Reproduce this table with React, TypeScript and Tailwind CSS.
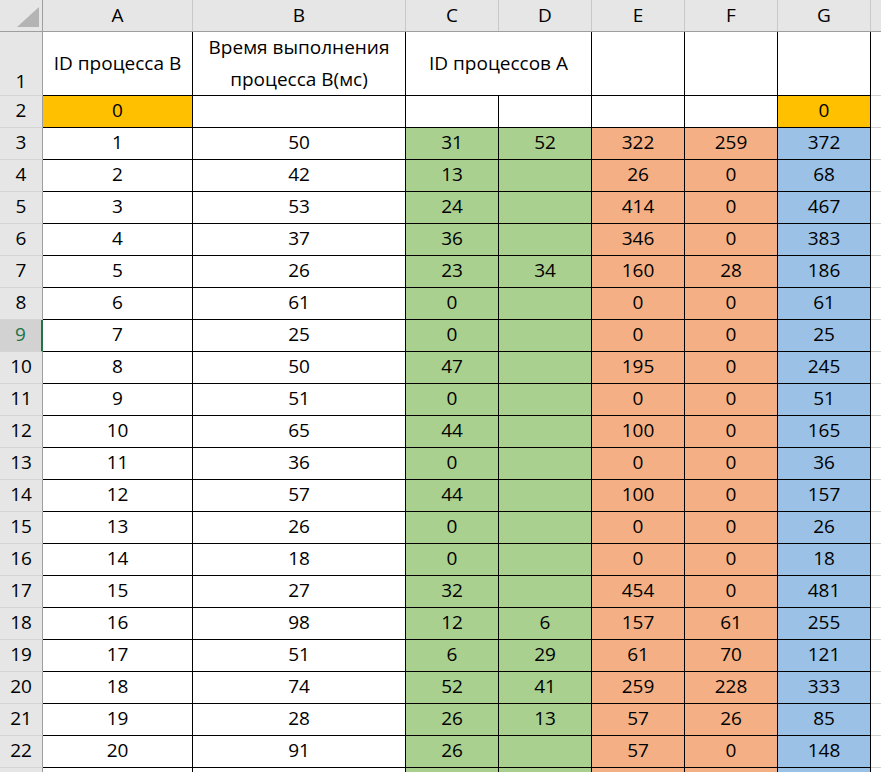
import * as React from "react";

type Fill = "none" | "orange" | "green" | "salmon" | "blue";

const fillClass: Record<Fill, string> = {
  none: "bg-white",
  orange: "bg-[#ffc000]",
  green: "bg-[#a9d08e]",
  salmon: "bg-[#f4b084]",
  blue: "bg-[#9bc2e6]",
};

// widths include the 1px right border
const cols = [
  { key: "A", w: "w-[150px]" },
  { key: "B", w: "w-[213px]" },
  { key: "C", w: "w-[93px]" },
  { key: "D", w: "w-[93px]" },
  { key: "E", w: "w-[93px]" },
  { key: "F", w: "w-[93px]" },
  { key: "G", w: "w-[93px]" },
];

const colFill: Fill[] = ["none", "none", "green", "green", "salmon", "salmon", "blue"];

const data: (number | "")[][] = [
  [1, 50, 31, 52, 322, 259, 372],
  [2, 42, 13, "", 26, 0, 68],
  [3, 53, 24, "", 414, 0, 467],
  [4, 37, 36, "", 346, 0, 383],
  [5, 26, 23, 34, 160, 28, 186],
  [6, 61, 0, "", 0, 0, 61],
  [7, 25, 0, "", 0, 0, 25],
  [8, 50, 47, "", 195, 0, 245],
  [9, 51, 0, "", 0, 0, 51],
  [10, 65, 44, "", 100, 0, 165],
  [11, 36, 0, "", 0, 0, 36],
  [12, 57, 44, "", 100, 0, 157],
  [13, 26, 0, "", 0, 0, 26],
  [14, 18, 0, "", 0, 0, 18],
  [15, 27, 32, "", 454, 0, 481],
  [16, 98, 12, 6, 157, 61, 255],
  [17, 51, 6, 29, 61, 70, 121],
  [18, 74, 52, 41, 259, 228, 333],
  [19, 28, 26, 13, 57, 26, 85],
  [20, 91, 26, "", 57, 0, 148],
];

function RowHeader({ n, h, bottom }: { n?: number; h: string; bottom?: boolean }) {
  const selected = n === 9;
  return (
    <div
      className={`flex w-[43px] shrink-0 justify-center border-b border-b-[#d4d4d4] ${h} ${
        bottom ? "items-end pb-1" : "items-center pb-[2px]"
      } ${
        selected
          ? "border-r-2 border-r-[#217346] bg-[#d2d2d2] text-[#217346]"
          : "border-r border-r-[#9e9e9e] bg-[#e6e6e6] text-black"
      }`}
    >
      {n}
    </div>
  );
}

function Tail({ h }: { h: string }) {
  return <div className={`flex-1 border-b border-b-[#d4d4d4] bg-white ${h}`} />;
}

export default function App() {
  return (
    <div
      className="h-[772px] w-[881px] overflow-hidden bg-white text-[19px] leading-none text-black"
      style={{ fontFamily: '"Open Sans", "Noto Sans", sans-serif' }}
    >
      {/* column letters */}
      <div className="flex h-[32px] border-b border-b-[#9e9e9e] bg-[#e6e6e6]">
        <div className="relative w-[43px] shrink-0 border-r border-r-[#9e9e9e]">
          <svg className="absolute left-0 top-0" width="42" height="31" viewBox="0 0 42 31">
            <polygon points="17,27 39,27 39,7" fill="#b4b4b4" />
          </svg>
        </div>
        {cols.map((c) => (
          <div
            key={c.key}
            className={`flex shrink-0 items-center justify-center border-r border-r-[#c8c8c8] pb-[1px] ${c.w}`}
          >
            {c.key}
          </div>
        ))}
        <div className="flex-1" />
      </div>

      {/* row 1: headings */}
      <div className="flex">
        <RowHeader n={1} h="h-[64px]" bottom />
        <div className="flex h-[64px] w-[150px] shrink-0 items-center justify-center border-b border-r border-black">
          ID процесса B
        </div>
        <div className="flex h-[64px] w-[213px] shrink-0 flex-col items-center justify-center border-b border-r border-black pb-[2px] leading-[32px]">
          <span>Время выполнения</span>
          <span>процесса B(мс)</span>
        </div>
        <div className="flex h-[64px] w-[186px] shrink-0 items-center justify-center border-b border-r border-black">
          ID процессов A
        </div>
        <div className="h-[64px] w-[93px] shrink-0 border-b border-r border-black" />
        <div className="h-[64px] w-[93px] shrink-0 border-b border-r border-black" />
        <div className="h-[64px] w-[93px] shrink-0 border-b border-r border-black" />
        <Tail h="h-[64px]" />
      </div>

      {/* row 2: zero markers */}
      <div className="flex">
        <RowHeader n={2} h="h-[32px]" />
        {cols.map((c, i) => (
          <div
            key={c.key}
            className={`flex h-[32px] shrink-0 items-center justify-center border-b border-r border-black pb-[2px] ${c.w} ${
              i === 0 || i === 6 ? fillClass.orange : fillClass.none
            }`}
          >
            {i === 0 || i === 6 ? 0 : ""}
          </div>
        ))}
        <Tail h="h-[32px]" />
      </div>

      {data.map((row, r) => (
        <div key={r} className="flex">
          <RowHeader n={r + 3} h="h-[32px]" />
          {row.map((v, i) => (
            <div
              key={i}
              className={`flex h-[32px] shrink-0 items-center justify-center border-b border-r border-black pb-[2px] ${cols[i].w} ${fillClass[colFill[i]]}`}
            >
              {v}
            </div>
          ))}
          <Tail h="h-[32px]" />
        </div>
      ))}

      {/* row 23, only its top edge is in view */}
      <div className="flex">
        <RowHeader h="h-[32px]" />
        {cols.map((c, i) => (
          <div
            key={c.key}
            className={`h-[32px] shrink-0 border-b border-r border-black ${c.w} ${fillClass[colFill[i]]}`}
          />
        ))}
        <Tail h="h-[32px]" />
      </div>
    </div>
  );
}
